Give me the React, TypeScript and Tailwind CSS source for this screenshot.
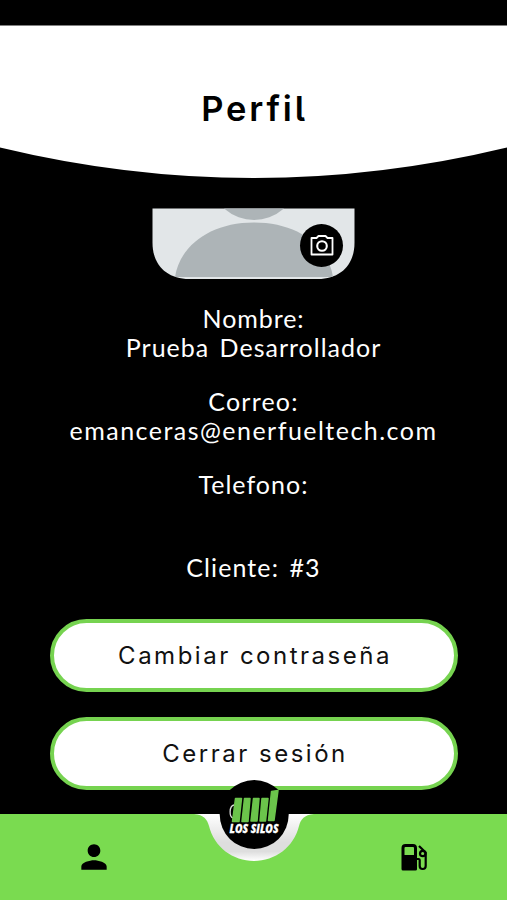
import React from "react";
import { MdPerson } from "react-icons/md";

function Header() {
  return (
    <header className="relative h-[154px] w-full shrink-0">
      <svg className="absolute inset-0" width="507" height="154" viewBox="0 0 507 154">
        <path d="M0 .4H507V122.5Q253.5 183.5 0 122.5Z" fill="#fff" />
      </svg>
      <h1 className="relative pt-[63px] pl-[2px] text-center font-['Inter'] text-[34.5px] leading-[42px] font-semibold tracking-[2.8px] text-black [font-feature-settings:'cv05']">
        Perfil
      </h1>
    </header>
  );
}

function Avatar() {
  return (
    <div className="relative mx-auto mt-[29px] h-[71px] w-[203px] shrink-0">
      <svg width="203" height="71" viewBox="0 -1 203 71">
        <defs>
          <clipPath id="card">
            <path d="M.5 -.5H202.500V34C202.500 56 188 70 166 70H37C15 70 .5 56 .5 34Z" />
          </clipPath>
        </defs>
        <g clipPath="url(#card)">
          <rect y="-1" width="203" height="71" fill="#e2e6e8" />
          <ellipse cx="102" cy="-24" rx="40" ry="35" fill="#adb4b7" />
          <path d="M23 68C28 36 59 13.500 102 13.500S176 36 181 68Z" fill="#adb4b7" />
        </g>
      </svg>
      <button className="absolute top-[16px] left-[148px] flex size-[43px] items-center justify-center rounded-full bg-black">
        <svg width="24" height="24" viewBox="0 0 24 24" fill="none" stroke="#fff" strokeWidth="1.8" strokeLinejoin="round">
          <path d="M1.500 4H6.500L8.500 2H15.500L17.500 4H22.500V20.500H1.500Z" />
          <circle cx="12" cy="12" r="4.8" strokeWidth="2.100" />
        </svg>
      </button>
    </div>
  );
}

function Details() {
  return (
    <section className="flex shrink-0 flex-col gap-[25px] pt-[25px] text-center font-['Lato',sans-serif] text-[25px] leading-[29px] text-white">
      <div>
        <p className="tracking-[0.9px]">Nombre:</p>
        <p className="tracking-[1px] [word-spacing:3px]">Prueba Desarrollador</p>
      </div>
      <div>
        <p className="tracking-[1.2px]">Correo:</p>
        <p className="tracking-[1.47px]">emanceras@enerfueltech.com</p>
      </div>
      <p className="h-[58px] tracking-[1.05px]">Telefono:</p>
      <p className="tracking-[1.1px] [word-spacing:3px]">Cliente: #3</p>
    </section>
  );
}

function PillButton({ children }: { children: React.ReactNode }) {
  return (
    <button className="h-[73px] w-[408px] rounded-full border-4 border-[#76d350] bg-white pl-[2px] font-['Inter'] text-[24px] tracking-[2.5px] text-[#111]">
      {children}
    </button>
  );
}

function Logo() {
  return (
    <svg className="absolute -top-[35px] left-[190px]" width="130" height="84" viewBox="190 779 130 84">
      <defs>
        <linearGradient id="notch" gradientUnits="userSpaceOnUse" x1="0" y1="814" x2="0" y2="861">
          <stop offset="0" stopColor="#fff" />
          <stop offset=".6" stopColor="#dedede" />
          <stop offset=".8" stopColor="#dedede" />
          <stop offset="1" stopColor="#fff" />
        </linearGradient>
      </defs>
      <path d="M194 814C204 815 207 819 209 826C214 847 233 861 254 861S294 847 299 826C301 819 304 815 314 814Z" fill="url(#notch)" />
      <circle cx="254.2" cy="814.5" r="34.5" fill="#000" />
      <path d="M234 805C229 806 229 817 233 818" stroke="#ddd" strokeWidth="1.3" fill="none" />
      <g fill="#6bc44b" stroke="#6bc44b" strokeWidth="1.5" strokeLinejoin="round">
        <path d="M235.500 798.500H241.500L239 821.500H232.500Z" />
        <path d="M244.500 798.500H250L248 821.500H242Z" />
        <path d="M253.500 798.500H259L257 821H251Z" />
        <path d="M262 798.500H268L265.500 821H260Z" />
        <path d="M271.500 791.500L278 790.500L274 820.500H268.500Z" />
      </g>
      <text x="229.5" y="833" textLength="49" lengthAdjust="spacingAndGlyphs" fill="#fff" stroke="#fff" strokeWidth=".3" fontFamily="Open Sans" fontWeight="800" fontStyle="italic" fontSize="12.5">
        LOS SILOS
      </text>
    </svg>
  );
}

function FuelPumpIcon() {
  return (
    <svg width="32" height="32" viewBox="0 0 32 32" fill="none" stroke="#000" strokeWidth="2" strokeLinejoin="round">
      <path d="M4 28V7Q4 4.500 6.500 4.500H14Q16.500 4.500 16.500 7V28Z" strokeWidth="3" />
      <path d="M4 15H16.500V28H4Z" fill="#000" />
      <path d="M17 18H19.500Q20.700 18 20.700 19V25Q20.700 28 23.700 28Q26.700 28 26.700 25V11.500L20 5" strokeWidth="2.200" />
      <circle cx="23.700" cy="12.500" r="2.700" strokeWidth="2.200" />
    </svg>
  );
}

function BottomNav() {
  return (
    <nav className="relative mt-auto flex h-[86px] shrink-0 items-center justify-between bg-[#7adb50] px-[76px] text-black">
      <MdPerson className="-ml-[1px] size-[38px]" />
      <Logo />
      <FuelPumpIcon />
    </nav>
  );
}

export default function App() {
  return (
    <main className="flex h-[900px] w-[507px] flex-col overflow-hidden bg-black">
      <div className="h-[25px] shrink-0" />
      <Header />
      <Avatar />
      <Details />
      <div className="mt-[37px] flex shrink-0 flex-col items-center gap-[25px] pl-[1px]">
        <PillButton>Cambiar contraseña</PillButton>
        <PillButton>Cerrar sesión</PillButton>
      </div>
      <BottomNav />
    </main>
  );
}
